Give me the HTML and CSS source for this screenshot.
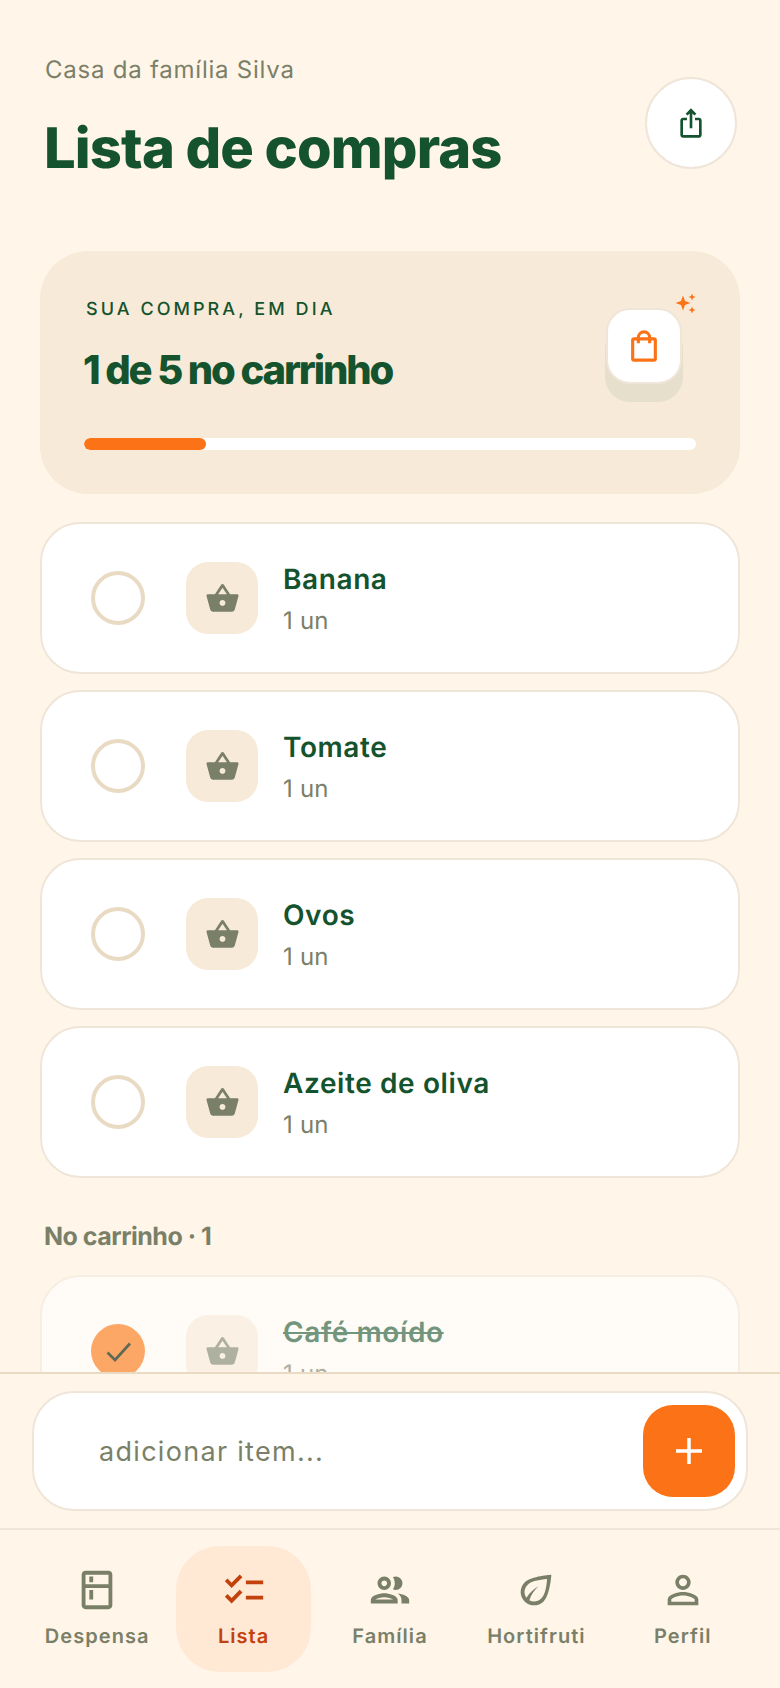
FILE: index.html
```html
<!DOCTYPE html>
<html lang="pt-BR">
<head>
  <meta charset="UTF-8">
  <title>Lista de compras</title>
  <link rel="stylesheet" href="styles.css">
</head>
<body>
  <div class="app">
    <main class="content">
      <header class="top">
        <div>
          <p class="house">Casa da família Silva</p>
          <h1>Lista de compras</h1>
        </div>
        <button class="share" type="button" aria-label="Compartilhar">
          <svg viewBox="0 0 24 24" width="32" height="32"><path d="M16 5l-1.42 1.42-1.59-1.59V16h-1.98V4.83L9.42 6.42 8 5l4-4 4 4zm4 5v11c0 1.1-.9 2-2 2H6c-1.11 0-2-.9-2-2V10c0-1.11.89-2 2-2h3v2H6v11h12V10h-3V8h3c1.1 0 2 .89 2 2z"/></svg>
        </button>
      </header>

      <section class="hero">
        <div class="hero-top">
          <div>
            <p class="hero-label">SUA COMPRA, EM DIA</p>
            <p class="hero-title">1 de 5 no carrinho</p>
          </div>
          <div class="hero-icon">
            <svg class="bag" viewBox="0 0 24 24" width="34" height="34"><rect x="4" y="7" width="16" height="15" rx="1"/><path d="M8 10V6a4 4 0 0 1 8 0v4"/></svg>
            <svg class="sparks" viewBox="0 0 24 24" width="24" height="24"><path d="M8 3.500L10 9l5.500 2L10 13l-2 5.500L6 13 .5 11 6 9zM17 1.500l1 2.500 2.500 1-2.500 1-1 2.500-1-2.500-2.500-1 2.500-1zM17 14.500l1 2.500 2.500 1-2.500 1-1 2.500-1-2.500-2.500-1 2.500-1z"/></svg>
          </div>
        </div>
        <div class="bar"><div class="bar-fill" style="width: 20%"></div></div>
      </section>

      <ul class="items">
        <li class="item">
          <span class="check"></span>
          <span class="tile"><svg viewBox="0 0 24 24" width="35" height="35"><path d="M17.210 9l-4.380-6.560c-.19-.28-.51-.42-.83-.42-.32 0-.64.14-.83.43L6.790 9H2c-.55 0-1 .45-1 1 0 .09.01.18.04.27l2.540 9.270c.23.84 1 1.460 1.920 1.460h13c.92 0 1.690-.62 1.930-1.460l2.540-9.270L23 10c0-.55-.45-1-1-1h-4.790zM9 9l3-4.400L15 9H9zm3 8c-1.100 0-2-.9-2-2s.9-2 2-2 2 .9 2 2-.9 2-2 2z"/></svg></span>
          <div class="info"><p class="name">Banana</p><p class="qty">1 un</p></div>
        </li>
        <li class="item">
          <span class="check"></span>
          <span class="tile"><svg viewBox="0 0 24 24" width="35" height="35"><path d="M17.210 9l-4.380-6.560c-.19-.28-.51-.42-.83-.42-.32 0-.64.14-.83.43L6.790 9H2c-.55 0-1 .45-1 1 0 .09.01.18.04.27l2.540 9.270c.23.84 1 1.460 1.920 1.460h13c.92 0 1.690-.62 1.930-1.460l2.540-9.270L23 10c0-.55-.45-1-1-1h-4.790zM9 9l3-4.400L15 9H9zm3 8c-1.100 0-2-.9-2-2s.9-2 2-2 2 .9 2 2-.9 2-2 2z"/></svg></span>
          <div class="info"><p class="name">Tomate</p><p class="qty">1 un</p></div>
        </li>
        <li class="item">
          <span class="check"></span>
          <span class="tile"><svg viewBox="0 0 24 24" width="35" height="35"><path d="M17.210 9l-4.380-6.560c-.19-.28-.51-.42-.83-.42-.32 0-.64.14-.83.43L6.790 9H2c-.55 0-1 .45-1 1 0 .09.01.18.04.27l2.540 9.270c.23.84 1 1.460 1.920 1.460h13c.92 0 1.690-.62 1.930-1.460l2.540-9.270L23 10c0-.55-.45-1-1-1h-4.790zM9 9l3-4.400L15 9H9zm3 8c-1.100 0-2-.9-2-2s.9-2 2-2 2 .9 2 2-.9 2-2 2z"/></svg></span>
          <div class="info"><p class="name">Ovos</p><p class="qty">1 un</p></div>
        </li>
        <li class="item">
          <span class="check"></span>
          <span class="tile"><svg viewBox="0 0 24 24" width="35" height="35"><path d="M17.210 9l-4.380-6.560c-.19-.28-.51-.42-.83-.42-.32 0-.64.14-.83.43L6.790 9H2c-.55 0-1 .45-1 1 0 .09.01.18.04.27l2.540 9.270c.23.84 1 1.460 1.920 1.460h13c.92 0 1.690-.62 1.930-1.460l2.540-9.270L23 10c0-.55-.45-1-1-1h-4.790zM9 9l3-4.400L15 9H9zm3 8c-1.100 0-2-.9-2-2s.9-2 2-2 2 .9 2 2-.9 2-2 2z"/></svg></span>
          <div class="info"><p class="name">Azeite de oliva</p><p class="qty">1 un</p></div>
        </li>
      </ul>

      <h2 class="section">No carrinho · 1</h2>

      <ul class="items">
        <li class="item done">
          <span class="check"><svg viewBox="0 0 24 24" width="36" height="36"><path d="M5 13l5 5L20 7"/></svg></span>
          <span class="tile"><svg viewBox="0 0 24 24" width="35" height="35"><path d="M17.210 9l-4.380-6.560c-.19-.28-.51-.42-.83-.42-.32 0-.64.14-.83.43L6.790 9H2c-.55 0-1 .45-1 1 0 .09.01.18.04.27l2.540 9.270c.23.84 1 1.460 1.920 1.460h13c.92 0 1.690-.62 1.930-1.460l2.540-9.270L23 10c0-.55-.45-1-1-1h-4.790zM9 9l3-4.400L15 9H9zm3 8c-1.100 0-2-.9-2-2s.9-2 2-2 2 .9 2 2-.9 2-2 2z"/></svg></span>
          <div class="info"><p class="name">Café moído</p><p class="qty">1 un</p></div>
        </li>
      </ul>
    </main>

    <div class="composer">
      <form class="add-form">
        <input class="add-input" type="text" placeholder="adicionar item...">
        <button class="add-btn" type="button" aria-label="Adicionar">
          <svg viewBox="0 0 26 26" width="26" height="26"><path d="M13 0v26M0 13h26"/></svg>
        </button>
      </form>
    </div>

    <nav class="nav">
      <a class="nav-item">
        <svg viewBox="0 0 24 24" width="46" height="46"><path d="M18 2.010 6 2c-1.110 0-2 .89-2 2v16c0 1.100.89 2 2 2h12c1.100 0 2-.9 2-2V4c0-1.110-.9-1.990-2-1.990zM18 20H6v-9.020h12V20zm0-11H6V4h12v5zM8 5h2v3H8zm0 7h2v5H8z"/></svg>
        <span>Despensa</span>
      </a>
      <a class="nav-item active">
        <svg viewBox="0 0 24 24" width="46" height="46"><path d="M22 7h-9v2h9V7zm0 8h-9v2h9v-2zM5.540 11 2 7.460l1.410-1.410 2.120 2.120 4.240-4.240 1.410 1.410L5.540 11zm0 8L2 15.460l1.410-1.410 2.120 2.120 4.240-4.240 1.410 1.410L5.540 19z"/></svg>
        <span>Lista</span>
      </a>
      <a class="nav-item">
        <svg viewBox="0 0 24 24" width="46" height="46"><path d="M9 13.750c-2.340 0-7 1.170-7 3.500V19h14v-1.750c0-2.330-4.660-3.500-7-3.500zM4.340 17c.84-.58 2.870-1.250 4.660-1.250s3.820.67 4.660 1.250H4.340zM9 12c1.930 0 3.500-1.570 3.500-3.500S10.930 5 9 5 5.500 6.570 5.500 8.500 7.070 12 9 12zm0-5c.83 0 1.500.67 1.500 1.500S9.830 10 9 10s-1.500-.67-1.500-1.500S8.170 7 9 7zm7.040 6.810c1.160.84 1.960 1.960 1.960 3.440V19h4v-1.750c0-2.020-3.500-3.170-5.960-3.440zM15 12c1.930 0 3.500-1.570 3.500-3.500S16.930 5 15 5c-.54 0-1.040.13-1.500.35.63.89 1 1.980 1 3.150s-.37 2.260-1 3.150c.46.22.96.35 1.500.35z"/></svg>
        <span>Família</span>
      </a>
      <a class="nav-item">
        <svg viewBox="0 0 24 24" width="46" height="46"><path d="M6.050 8.050c-2.730 2.730-2.730 7.170 0 9.900C7.420 19.320 9.210 20 11 20s3.580-.68 4.950-2.050C19.430 14.470 20 4 20 4S9.530 4.570 6.050 8.050zm8.490 8.490c-.94.95-2.200 1.460-3.540 1.460-.89 0-1.730-.25-2.480-.68.92-2.880 2.620-5.410 4.880-7.320-2.630 1.360-4.840 3.460-6.370 6.040-1.480-1.960-1.350-4.750.44-6.540C9.210 7.270 13.960 6.500 17.800 6.200c-.3 3.840-1.070 8.590-3.260 10.340z"/></svg>
        <span>Hortifruti</span>
      </a>
      <a class="nav-item">
        <svg viewBox="0 0 24 24" width="46" height="46"><path d="M12 5.900c1.160 0 2.100.94 2.100 2.100s-.94 2.100-2.100 2.100S9.900 9.160 9.900 8s.94-2.100 2.100-2.100m0 9c2.970 0 6.100 1.460 6.100 2.100v1.100H5.900V17c0-.64 3.130-2.100 6.100-2.100M12 4C9.790 4 8 5.790 8 8s1.790 4 4 4 4-1.790 4-4-1.790-4-4-4zm0 9c-2.670 0-8 1.340-8 4v3h16v-3c0-2.660-5.330-4-8-4z"/></svg>
        <span>Perfil</span>
      </a>
    </nav>
  </div>
</body>
</html>
```

FILE: styles.css
```css
* {
  box-sizing: border-box;
}

body {
  margin: 0;
  background: #fff5e9;
  font-family: Inter, "Liberation Sans", sans-serif;
  text-rendering: geometricPrecision;
}

p, h1, h2, ul {
  margin: 0;
  padding: 0;
}

.app {
  height: 1688px;
  display: flex;
  flex-direction: column;
  overflow: hidden;
}

.content {
  flex: 1;
  min-height: 0;
  overflow: hidden;
  padding: 54px 40px 0;
}

.top {
  display: flex;
  justify-content: space-between;
  padding: 0 3px 0 5px;
  height: 128px;
  margin-bottom: 69px;
}

.house {
  font-size: 24px;
  line-height: 32px;
  letter-spacing: 0.77px;
  color: #7a7f68;
}

h1 {
  font-size: 56px;
  line-height: 68px;
  margin-top: 28px;
  margin-left: -1px;
  font-weight: 800;
  letter-spacing: -0.85px;
  color: #14532d;
}

.share {
  width: 92px;
  height: 92px;
  margin-top: 23px;
  border-radius: 50%;
  border: 2px solid #efe5d8;
  background: #fff;
  display: flex;
  align-items: center;
  justify-content: center;
  padding: 0;
}

.share svg {
  fill: #14532d;
}

.hero {
  height: 243px;
  border-radius: 48px;
  background: #f7ead8;
  padding: 45px 44px 0;
  margin-bottom: 28px;
}

.hero-top {
  display: flex;
  justify-content: space-between;
  height: 142px;
}

.hero-label {
  font-size: 18px;
  line-height: 28px;
  font-weight: 500;
  letter-spacing: 3.06px;
  color: #14532d;
  padding-left: 2px;
}

.hero-title {
  font-size: 40px;
  line-height: 52px;
  margin-top: 20px;
  margin-left: -1px;
  font-weight: 800;
  letter-spacing: -2.1px;
  color: #14532d;
}

.hero-icon {
  position: relative;
  width: 76px;
  height: 76px;
  margin-top: 12px;
  margin-right: 14px;
  border-radius: 24px;
  border: 2px solid #efe5d8;
  background: #fff;
  box-shadow: 0 17px 0 1px #e5dfcc;
  display: flex;
  align-items: center;
  justify-content: center;
}

.bag {
  fill: none;
  stroke: #fb7316;
  stroke-width: 2.2;
  stroke-linejoin: round;
}

.sparks {
  position: absolute;
  top: -18px;
  right: -19px;
  fill: #fb7316;
}

.bar {
  height: 12px;
  border-radius: 6px;
  background: #fff;
  overflow: hidden;
}

.bar-fill {
  height: 100%;
  border-radius: 6px;
  background: #fb7316;
}

.items {
  list-style: none;
  display: flex;
  flex-direction: column;
  gap: 16px;
}

.item {
  height: 152px;
  border-radius: 40px;
  border: 2px solid #efe5d8;
  background: #fff;
  display: flex;
  align-items: center;
  padding: 0 0 0 49px;
}

.check {
  width: 54px;
  height: 54px;
  border-radius: 50%;
  border: 4px solid #e8dac3;
  flex: none;
  display: flex;
  align-items: center;
  justify-content: center;
}

.tile {
  width: 72px;
  height: 72px;
  margin-left: 41px;
  margin-right: 25px;
  border-radius: 22px;
  background: #f7ead8;
  flex: none;
  display: flex;
  align-items: center;
  justify-content: center;
}

.tile svg {
  fill: #7a7f68;
}

.info {
  padding-top: 2px;
}

.name {
  font-size: 28px;
  line-height: 36px;
  font-weight: 600;
  letter-spacing: 0.6px;
  color: #14532d;
}

.qty {
  font-size: 24px;
  line-height: 32px;
  margin-top: 8px;
  letter-spacing: 0.2px;
  color: #7a7f68;
}

.section {
  font-size: 25px;
  line-height: 32px;
  font-weight: 700;
  letter-spacing: -0.5px;
  color: #7a7f68;
  margin: 43px 0 22px 4px;
}

.done {
  background: #fffbf6;
  border-color: #f6eee2;
}

.done .tile,
.done .info {
  opacity: 0.6;
}

.done .check {
  border: 0;
  background: #fda766;
}

.done .check svg {
  fill: none;
  stroke: #5f6a55;
  stroke-width: 1.8;
}

.done .name {
  text-decoration: line-through;
}

.composer {
  flex: none;
  height: 158px;
  padding: 17px 32px;
  border-top: 2px solid #e8dac3;
  border-bottom: 2px solid #efe5d8;
  background: #fff5e9;
}

.add-form {
  height: 120px;
  border-radius: 42px;
  border: 2px solid #efe5d8;
  background: #fff;
  display: flex;
  align-items: center;
  padding: 0 11px 0 65px;
}

.add-input {
  flex: 1;
  min-width: 0;
  border: 0;
  outline: 0;
  padding: 0;
  background: none;
  font-family: inherit;
  font-size: 27px;
  letter-spacing: 1.3px;
}

.add-input::placeholder {
  color: #7a7f68;
  opacity: 1;
}

.add-btn {
  width: 92px;
  height: 92px;
  border: 0;
  border-radius: 30px;
  background: #fb7316;
  display: flex;
  align-items: center;
  justify-content: center;
  padding: 0;
}

.add-btn svg {
  stroke: #fff;
  stroke-width: 3.500;
  stroke-linecap: round;
}

.nav {
  flex: none;
  height: 158px;
  padding: 16px 30px;
  display: grid;
  grid-template-columns: repeat(5, 1fr);
  gap: 12px;
}

.nav-item {
  border-radius: 44px;
  display: flex;
  flex-direction: column;
  align-items: center;
  padding-top: 21px;
  color: #7a7f68;
  font-size: 20px;
  line-height: 28px;
  font-weight: 600;
  letter-spacing: 1.05px;
  white-space: nowrap;
}

.nav-item svg {
  fill: currentColor;
  margin-bottom: 9px;
}

.nav-item.active {
  background: #ffe8d4;
  color: #c2410c;
}
```
